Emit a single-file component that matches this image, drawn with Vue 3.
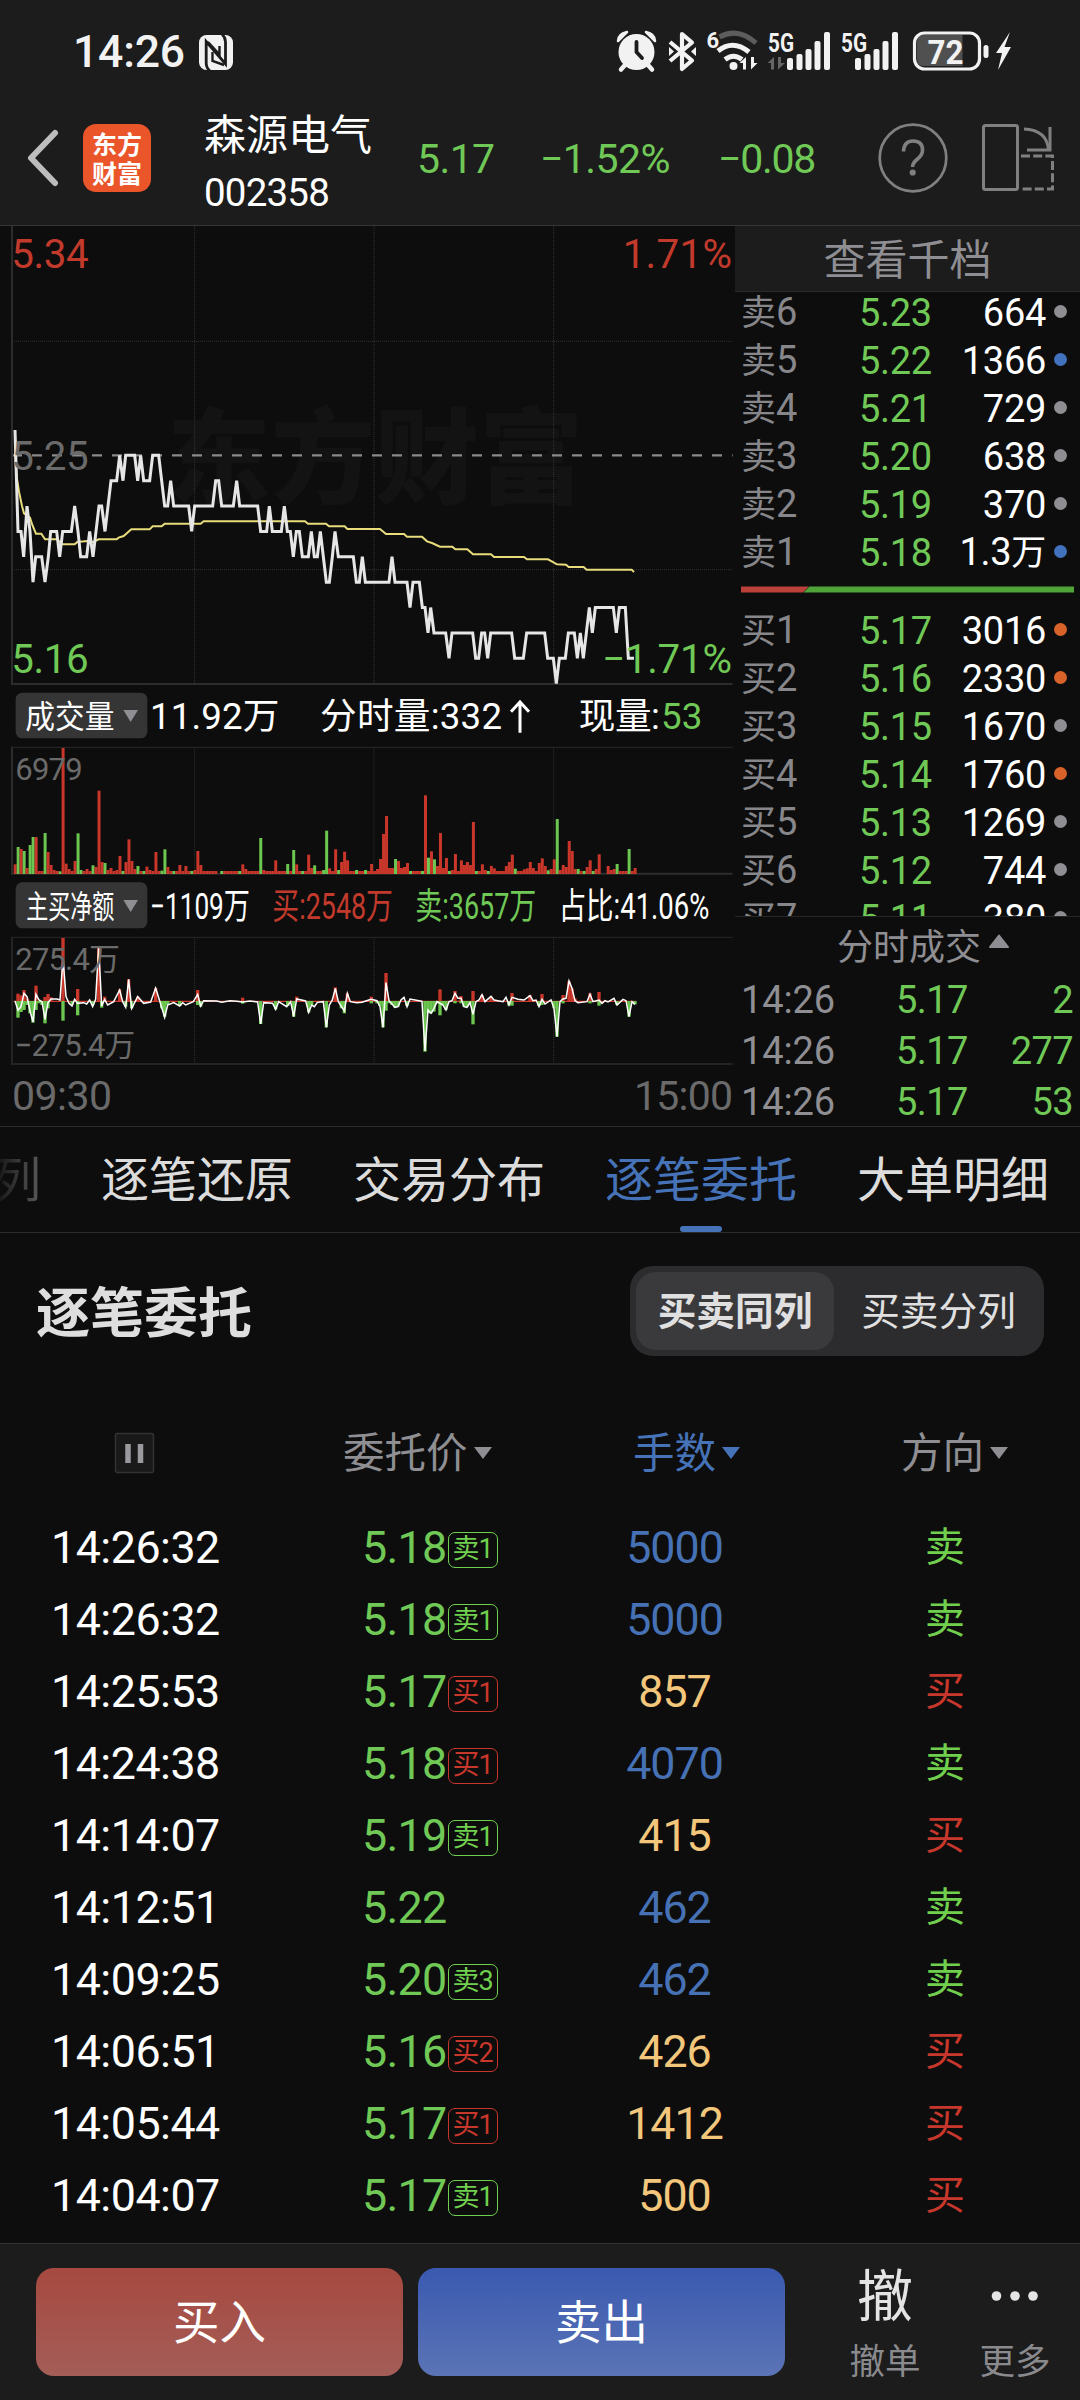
<script setup>
// Intraday chart geometry uses a 3x grid: one unit is a third of a pixel.
const priceSteps = '45,26 54,22 63,22 71,21 81,23 90,22 99,20 107,21 125,21 135,20 145,21 152,22 170,22 179,21 188,22 214,22 224,23 234,22 242,21 260,21 269,22 279,21 288,22 297,23 305,23 315,22 324,23 333,24 350,24 359,25 369,24 377,25 404,25 413,24 422,25 431,24 449,24 458,25 476,25 485,24 494,23 503,23 512,24 521,23 566,23 575,22 584,23 638,23 647,24 656,24 665,23 700,23 710,24 719,23 773,23 782,22 800,22 808,23 817,22 844,22 853,23 862,22 871,22 880,21 889,22 898,22 907,21 925,21 934,22 943,21 952,21 961,22 970,21 979,20 988,20 997,21 1005,22 1015,21 1060,21 1069,20 1078,20 1087,21 1096,20 1167,20 1176,21 1185,20 1221,20 1230,19 1239,20 1258,20 1267,19 1275,19 1284,18 1292,19 1302,18 1337,18 1347,17 1356,18 1418,18 1427,17 1436,17 1445,18 1454,18 1463,17 1472,18 1535,18 1544,17 1570,17 1580,18 1634,18 1643,17 1660,17 1669,16 1678,17 1696,17 1705,18 1723,18 1732,17 1741,18 1750,17 1759,18 1768,19 1777,18 1786,19 1840,19 1849,18 1858,19 1876,19 1885,17 1902,17'
const pricePoints = priceSteps.split(' ').map((p) => {
  const [x, cents] = p.split(',').map(Number)
  return `${x},${(706 + (25 - cents) * 76.1).toFixed(1)}`
}).join(' ')

const averagePoints = '45,700 50,770 57,815 66,858 72,880 90,893 97,915 108,941 124,941 135,958 170,958 188,973 224,973 232,966 262,963 280,966 296,958 350,958 356,953 371,948 394,928 449,928 458,919 485,919 494,911 602,911 611,904 915,904 924,911 978,911 987,919 1034,919 1042,927 1140,927 1158,942 1212,942 1221,950 1266,950 1281,964 1296,969 1320,980 1357,980 1366,988 1402,988 1419,1003 1473,1003 1482,1011 1572,1011 1581,1018 1644,1018 1671,1033 1698,1034 1706,1041 1751,1041 1760,1049 1895,1049 1902,1056'

const volumePeaks = '45r553 54g501 63r507 72g513 81r564 90g495 99g471 108r471 135g459 144r516 153r555 162r570 180g574 189r204 198r551 207r567 224r543 233g460 242g570 260r567 278g556 287r561 296r332 305r546 314g549 323r570 332r564 350r570 359r528 368g573 377r546 386r478 395r543 404r567 413g558 431g573 440r560 449r570 467r516 485g572 494g508 503r561 521g573 539r555 557r558 575g573 584r570 593r513 602r555 656r582 665g573 719g573 728r553 737r567 782g474 791r570 827r541 863g552 881g510 890r553 908g573 926r524 935r564 943g556 970g570 979g452 988r565 1006r508 1015g570 1024r546 1033r515 1042r541 1069g570 1096g570 1114r552 1131r567 1140r537 1149r462 1158r408 1167r564 1176r564 1185g537 1194r543 1203r564 1212r561 1221r549 1230g573 1266g573 1275r346 1284g533 1293r514 1302g538 1311r558 1320r459 1329r564 1338r534 1347g573 1356r570 1365r522 1383r541 1392r555 1401r546 1410r555 1419r426 1428g573 1446r553 1455r570 1464g573 1473r558 1482r565 1518r558 1527r546 1536r524 1545g566 1572r568 1581r565 1590r546 1599r564 1617r549 1626r535 1635r558 1644g571 1653r567 1662r538 1671g417 1680r570 1689r555 1698r561 1707r483 1716r513 1725r567 1734g567 1752g573 1761r561 1770r541 1779g573 1788r567 1797r523 1806r582 1815r582 1824r558 1833r570 1842r567 1851g552 1887g507 1905r564'
const slot = 8.985
const volumeBars = Array.from({ length: 208 }, () => ({ color: 'r', top: 573 }))
for (const peak of volumePeaks.split(' ')) {
  const [, x, color, top] = peak.match(/(\d+)([rg])(\d+)/)
  volumeBars[Math.round((x - 45) / slot)] = { color, top: Number(top) }
}

const netBars = '54,941,1013 63,946,996 72,930,990 81,955,975 90,963,1000 99,963,1028 108,917,990 117,963,970 126,963,975 135,951,1030 144,942,985 153,952,963 189,774,1022 216,963,974 233,927,1006 278,963,975 296,800,963 305,963,983 314,950,963 359,928,963 377,963,980 386,898,963 395,963,985 413,950,963 467,924,963 485,963,985 494,963,1010 503,963,975 539,963,978 593,930,975 602,963,980 728,953,971 782,963,1032 827,963,988 863,963,978 881,963,1010 890,950,963 926,963,997 935,963,975 979,963,1042 1006,922,963 1024,963,985 1033,963,1000 1042,940,963 1114,950,970 1131,963,970 1140,963,978 1149,963,1042 1158,879,992 1167,963,970 1176,963,975 1185,963,983 1194,963,980 1221,963,978 1275,963,1115 1284,963,1000 1293,963,1000 1302,963,995 1311,963,970 1320,928,1006 1329,963,975 1338,963,990 1365,933,970 1383,948,970 1392,963,980 1401,963,980 1410,963,970 1419,933,1033 1446,945,963 1473,950,963 1527,963,977 1536,939,977 1590,945,963 1617,963,978 1626,942,975 1662,963,985 1671,963,1070 1689,945,970 1707,903,963 1716,925,963 1725,955,963 1770,940,970 1797,936,977 1851,963,975 1887,963,1010 1905,963,973'
  .split(' ').map((b) => b.split(',').map(Number))

const netLine = '45,963 54,991 63,980 72,940 81,950 90,993 99,1026 108,943 117,960 126,965 135,1018 144,968 153,957 171,957 180,960 189,835 198,950 207,970 216,978 224,958 233,970 251,968 260,972 269,960 278,980 287,958 296,800 305,978 314,958 323,975 341,965 359,930 368,965 377,982 386,898 395,985 413,950 431,970 452,966 467,924 480,966 494,1012 503,975 521,968 539,978 548,968 557,975 580,965 593,943 602,978 611,962 650,963 665,967 690,962 710,964 728,966 750,963 773,966 782,1032 791,968 818,970 827,988 836,965 860,980 872,965 881,1010 890,957 917,963 926,997 935,975 943,980 952,967 970,965 979,1042 988,975 997,960 1006,925 1015,965 1033,993 1042,940 1051,965 1070,968 1086,967 1113,958 1131,962 1140,980 1149,1042 1158,908 1167,962 1185,982 1194,980 1203,960 1212,952 1221,980 1230,957 1257,962 1266,964 1275,1113 1284,990 1293,1000 1302,985 1311,965 1329,975 1338,990 1347,965 1356,962 1365,940 1374,955 1383,955 1392,980 1401,982 1410,968 1419,1003 1428,965 1437,960 1446,944 1455,965 1473,949 1482,960 1509,965 1518,952 1527,975 1536,952 1554,958 1572,960 1590,947 1599,962 1608,960 1617,980 1626,958 1635,972 1653,960 1662,985 1671,1070 1680,965 1689,957 1698,955 1707,903 1716,925 1725,962 1734,968 1761,965 1770,943 1779,965 1797,960 1806,970 1815,962 1824,966 1842,955 1851,975 1869,958 1878,962 1887,1010 1896,965 1905,973'

const asks = [
  ['6', '5.23', '664', '', 'grey'],
  ['5', '5.22', '1366', '', 'blue'],
  ['4', '5.21', '729', '', 'grey'],
  ['3', '5.20', '638', '', 'grey'],
  ['2', '5.19', '370', '', 'grey'],
  ['1', '5.18', '1.3', '万', 'blue'],
]
const bids = [
  ['1', '5.17', '3016', '', 'orange'],
  ['2', '5.16', '2330', '', 'orange'],
  ['3', '5.15', '1670', '', 'grey'],
  ['4', '5.14', '1760', '', 'orange'],
  ['5', '5.13', '1269', '', 'grey'],
  ['6', '5.12', '744', '', 'grey'],
  ['7', '5.11', '380', '', 'grey'],
]
const trades = [['14:26', '5.17', '2'], ['14:26', '5.17', '277'], ['14:26', '5.17', '53']]

const tabs = ['逐笔还原', '交易分布', '逐笔委托', '大单明细']

const orders = [
  ['14:26:32', '5.18', '卖1', '5000', '卖'],
  ['14:26:32', '5.18', '卖1', '5000', '卖'],
  ['14:25:53', '5.17', '买1', '857', '买'],
  ['14:24:38', '5.18', '买1', '4070', '卖'],
  ['14:14:07', '5.19', '卖1', '415', '买'],
  ['14:12:51', '5.22', '', '462', '卖'],
  ['14:09:25', '5.20', '卖3', '462', '卖'],
  ['14:06:51', '5.16', '买2', '426', '买'],
  ['14:05:44', '5.17', '买1', '1412', '买'],
  ['14:04:07', '5.17', '卖1', '500', '买'],
]
const side = (text) => (text.startsWith('买') ? 'buy' : 'sell')
const lotTone = (o) => (o[4] === '卖' ? 'lot-blue' : 'lot-gold')
</script>

<template>
  <div class="screen">
    <header class="top">
      <div class="status">
        <span class="clock">14:26</span>
        <svg class="nfc" width="36" height="37" viewBox="0 0 36 37">
          <rect x="1" y="1" width="34" height="35" rx="7.500" fill="#f2f2f2" />
          <path d="M12 37Q8.200 34 8.200 29V7.500L27.500 30V8Q27.500 3.500 24 0" fill="none" stroke="#1c1c1c" stroke-width="2.800" />
          <path d="M10 8L21.500 20.500V12M14.500 18V27L26 31" fill="none" stroke="#1c1c1c" stroke-width="2.400" />
        </svg>
        <svg class="signals" width="400" height="50" viewBox="0 0 400 50">
          <g fill="#f2f2f2">
            <circle cx="26.500" cy="31" r="18" />
            <path d="M8 20Q8 13 17 11Z M45 20Q45 13 36 11Z" stroke="#f2f2f2" stroke-width="2.500" stroke-linejoin="round" />
          </g>
          <path d="M15 44L11 48.500M38 44L42 48.500" stroke="#f2f2f2" stroke-width="4.500" stroke-linecap="round" />
          <path d="M26.500 21V31L32 37" stroke="#1c1c1c" stroke-width="3.800" fill="none" stroke-linecap="round" />
          <path d="M60 21L82 39.500L72 48V13L82 21.500L60 40" fill="none" stroke="#f2f2f2" stroke-width="4.200" stroke-linejoin="round" />
          <path d="M59 26L64 30.500L59 35ZM86 26L81 30.500L86 35Z" fill="#f2f2f2" />
          <text x="96.500" y="26.500" class="sig" font-size="22" textLength="11">6</text>
          <g fill="none" stroke-width="5">
            <path d="M109.500 16Q128 6 146 22" stroke="#5d5d5d" />
            <path d="M108 30Q123 18 139 31" stroke="#f2f2f2" />
            <path d="M115 38.500Q123.500 32 132 38.500" stroke="#f2f2f2" />
          </g>
          <circle cx="123.500" cy="45" r="4" fill="#f2f2f2" />
          <path d="M129.500 42L136 36V48.500H133V42ZM147.500 42L141 48.500V36H144V42Z" fill="#f2f2f2" />
          <text x="158" y="30.500" class="sig" font-size="26" textLength="26" lengthAdjust="spacingAndGlyphs">5G</text>
          <path d="M157.500 42L164 36V48.500H161V42ZM175 42L168 48.500V36H171V42Z" fill="#666" />
          <g fill="#f2f2f2">
            <rect x="177" y="37" width="6" height="12" rx="2" /><rect x="186.500" y="33" width="6" height="16" rx="2" /><rect x="195.500" y="28" width="6" height="21" rx="2" /><rect x="204.500" y="20" width="6" height="29" rx="2" /><rect x="214" y="11" width="6" height="38" rx="2" />
            <rect x="245" y="37" width="6" height="12" rx="2" /><rect x="254.500" y="33" width="6" height="16" rx="2" /><rect x="263.500" y="28" width="6" height="21" rx="2" /><rect x="272.500" y="20" width="6" height="29" rx="2" /><rect x="282" y="11" width="6" height="38" rx="2" />
          </g>
          <text x="231" y="30.500" class="sig" font-size="26" textLength="26" lengthAdjust="spacingAndGlyphs">5G</text>
          <path d="M313 14H352.500V45H313Q307 45 307 38V21Q307 14 313 14Z" fill="#505050" />
          <rect x="304.500" y="12" width="65" height="36" rx="10" fill="none" stroke="#f2f2f2" stroke-width="3.200" />
          <rect x="373.500" y="24" width="5" height="13" rx="2.500" fill="#f2f2f2" />
          <text x="317.500" y="42.500" class="sig" font-size="34" textLength="36" lengthAdjust="spacingAndGlyphs">72</text>
          <path d="M400 11L386 32H392L388 49L401 26H394.500Z" fill="#f2f2f2" />
        </svg>
      </div>
      <div class="quote">
        <svg class="back" width="34" height="58" viewBox="0 0 34 58"><path d="M29 4L5 29L29 54" fill="none" stroke="#bdbdbd" stroke-width="6" stroke-linecap="round" stroke-linejoin="round" /></svg>
        <div class="logo"><span>东方</span><span>财富</span></div>
        <div class="stock"><span class="name">森源电气</span><span class="code">002358</span></div>
        <span class="q q1">5.17</span>
        <span class="q q2">−1.52%</span>
        <span class="q q3">−0.08</span>
        <svg class="help" width="70" height="70" viewBox="0 0 70 70">
          <circle cx="35" cy="35" r="33.300" fill="none" stroke="#808080" stroke-width="2.700" />
          <path d="M25.500 28.500Q26 18 35 18Q44.500 18 44.500 27Q44.500 32 39.500 36Q34.500 40 34.500 44" fill="none" stroke="#808080" stroke-width="3.600" />
          <circle cx="34.700" cy="49.500" r="3.100" fill="#808080" />
        </svg>
        <svg class="rotate" width="74" height="70" viewBox="0 0 74 70" fill="none" stroke="#808080" stroke-width="3">
          <rect x="2.500" y="2.500" width="34" height="64" rx="2" />
          <path d="M43 6Q66 7 67.500 27" /><path d="M69 4V27H46" />
          <path d="M40 33H71.500V66H40" stroke-dasharray="9 3.200" />
        </svg>
      </div>
    </header>

    <section class="market">
      <div class="charts">
        <svg width="735" height="464" viewBox="0 18 2205 1392">
          <g class="mark" font-size="312">
            <text x="500" y="828" textLength="1250">东方财富</text>
          </g>
          <g class="dots"><path d="M584 18V1390M1122 18V1390M1661 18V1390M36 364H2198M36 1049H2198" /></g>
          <path d="M36 706H2198" stroke="#8a8a8a" stroke-width="7" stroke-dasharray="30 30" />
          <path d="M36 18V1392H2198" fill="none" stroke="#2c2c2c" stroke-width="6" />
          <polyline :points="averagePoints" class="avg" />
          <polyline :points="pricePoints" class="line" />
          <g font-size="121">
            <text x="34" y="143" textLength="232" class="f-red">5.34</text>
            <text x="34" y="749" textLength="232" class="f-dim">5.25</text>
            <text x="34" y="1358" textLength="232" class="f-green">5.16</text>
            <text x="1868" y="143" textLength="328" class="f-red">1.71%</text>
            <text x="1806" y="1358" textLength="390" class="f-green">−1.71%</text>
          </g>
        </svg>
        <svg width="735" height="56" viewBox="0 30 2205 168">
          <rect x="47" y="38" width="395" height="137" rx="20" fill="#353535" />
          <g font-size="110">
            <text x="76" y="144" font-size="95" textLength="268" lengthAdjust="spacingAndGlyphs" class="f-white">成交量</text>
            <path d="M370 90H414L392 126Z" fill="#8e8e93" />
            <text x="450" y="147" textLength="388" class="f-white">11.92万</text>
            <text x="960" y="147" textLength="546" class="f-white">分时量:332</text>
            <path d="M1560 158V66M1533 95L1560 66L1587 95" fill="none" stroke="#fff" stroke-width="9" />
            <text x="1736" y="147" textLength="244" class="f-white">现量:</text>
            <text x="1983" y="147" textLength="124" class="f-green">53</text>
          </g>
        </svg>
        <svg width="735" height="132" viewBox="0 198 2205 396">
          <g class="dots"><path d="M584 202V580M1122 202V580M1661 202V580" /></g>
          <path d="M36 202H2198" stroke="#292929" stroke-width="3" />
          <path d="M36 200V581H2198" fill="none" stroke="#2c2c2c" stroke-width="6" />
          <rect v-for="(b, i) in volumeBars" :key="i" :x="41 + i * slot" :y="b.top" width="9" :height="582 - b.top" :class="b.color === 'r' ? 'b-red' : 'b-green'" />
          <text x="46" y="299" font-size="93" textLength="202" class="f-dim">6979</text>
        </svg>
        <svg width="735" height="56" viewBox="0 594 2205 168">
          <rect x="47" y="607" width="395" height="138" rx="20" fill="#353535" />
          <g font-size="110">
            <text x="79" y="714" font-size="95" textLength="264" lengthAdjust="spacingAndGlyphs" class="f-white">主买净额</text>
            <path d="M370 660H414L392 696Z" fill="#8e8e93" />
            <text x="450" y="716" textLength="300" lengthAdjust="spacingAndGlyphs" class="f-white">−1109万</text>
            <text x="817" y="716" textLength="362" lengthAdjust="spacingAndGlyphs" class="f-red">买:2548万</text>
            <text x="1246" y="716" textLength="363" lengthAdjust="spacingAndGlyphs" class="f-green">卖:3657万</text>
            <text x="1676" y="716" textLength="452" lengthAdjust="spacingAndGlyphs" class="f-white">占比:41.06%</text>
          </g>
        </svg>
        <svg width="735" height="192" viewBox="0 762 2205 576">
          <g class="dots"><path d="M584 771V1152M1122 771V1152M1661 771V1152" /></g>
          <path d="M36 772H2198" stroke="#292929" stroke-width="3" />
          <path d="M36 770V1152H2198" fill="none" stroke="#242424" stroke-width="6" />
          <path d="M41 964H1908" stroke="#d03a2c" stroke-width="4" />
          <g v-for="b in netBars" :key="b[0]">
            <rect :x="b[0] - 5" :y="b[1]" width="10" :height="963 - b[1]" class="b-red" />
            <rect :x="b[0] - 5" y="963" width="10" :height="b[2] - 963" class="b-green" />
          </g>
          <polyline :points="netLine" class="net" />
          <g font-size="93">
            <text x="46" y="869" textLength="314" class="f-dim">275.4万</text>
            <text x="44" y="1128" textLength="362" class="f-dim">−275.4万</text>
          </g>
          <g font-size="123">
            <text x="36" y="1289" textLength="300" class="f-dim">09:30</text>
            <text x="1902" y="1289" textLength="297" class="f-dim">15:00</text>
          </g>
        </svg>
      </div>

      <aside class="book">
        <div class="book-head">查看千档</div>
        <div class="levels">
          <div v-for="r in asks" :key="'a' + r[0]" class="level">
            <span class="lv">卖<b>{{ r[0] }}</b></span><span class="pr">{{ r[1] }}</span>
            <span class="qty">{{ r[2] }}<i v-if="r[3]">{{ r[3] }}</i></span><span class="dot" :class="r[4]"></span>
          </div>
          <svg class="ratio" width="333" height="30" viewBox="0 0 333 30">
            <path d="M0 10.500H68L62 16.500H0Z" fill="#b9413a" /><path d="M68.500 10.500H333V16.500H62.500Z" fill="#4fa338" />
          </svg>
          <div v-for="r in bids" :key="'b' + r[0]" class="level">
            <span class="lv">买<b>{{ r[0] }}</b></span><span class="pr">{{ r[1] }}</span>
            <span class="qty">{{ r[2] }}</span><span class="dot" :class="r[4]"></span>
          </div>
        </div>
        <div class="ticks-head">分时成交<svg width="22" height="15" viewBox="0 0 22 15"><path d="M11 1.500L20 13H2Z" fill="#8e8e93" stroke="#8e8e93" stroke-width="2" stroke-linejoin="round" /></svg></div>
        <div v-for="(t, i) in trades" :key="i" class="tick"><span class="tm">{{ t[0] }}</span><span class="tp">{{ t[1] }}</span><span class="tq">{{ t[2] }}</span></div>
      </aside>
    </section>

    <nav class="tabs">
      <span class="tab cut">列</span>
      <span v-for="(t, i) in tabs" :key="t" class="tab" :class="{ on: i === 2 }">{{ t }}</span>
    </nav>

    <section class="panel">
      <div class="panel-head">
        <h2>逐笔委托</h2>
        <div class="toggle"><span class="opt active">买卖同列</span><span class="opt">买卖分列</span></div>
      </div>
      <div class="thead">
        <span class="c-time"><svg width="42" height="42" viewBox="0 0 42 42"><rect x="1.500" y="1.500" width="38" height="39" rx="2" fill="#191919" stroke="#333" stroke-width="1.500" /><path d="M14 12V31M26.500 12V31" stroke="#9a9a9e" stroke-width="5.500" /></svg></span>
        <span class="c-price">委托价<em></em></span>
        <span class="c-lot hot">手数<em></em></span>
        <span class="c-side">方向<em></em></span>
      </div>
      <div v-for="(o, i) in orders" :key="i" class="row">
        <span class="c-time">{{ o[0] }}</span>
        <span class="c-price">{{ o[1] }}<small v-if="o[2]" :class="side(o[2])">{{ o[2] }}</small></span>
        <span class="c-lot" :class="lotTone(o)">{{ o[3] }}</span>
        <span class="c-side" :class="side(o[4])">{{ o[4] }}</span>
      </div>
    </section>

    <footer class="bar">
      <div class="btn btn-buy">买入</div>
      <div class="btn btn-sell">卖出</div>
      <div class="act"><span class="glyph">撤</span><span class="cap">撤单</span></div>
      <div class="act more"><span class="glyph"><svg width="48" height="12" viewBox="0 0 48 12"><circle cx="5.500" cy="6" r="4.800" /><circle cx="24" cy="6" r="4.800" /><circle cx="42" cy="6" r="4.800" /></svg></span><span class="cap">更多</span></div>
    </footer>
  </div>
</template>

<style>
body { background: #0d0d0d; }
</style>

<style scoped>
.screen { width: 1080px; height: 2400px; background: #0d0d0d; color: #fff; font-family: Roboto, "Noto Sans CJK SC", sans-serif; overflow: hidden; display: flex; flex-direction: column; box-sizing: border-box; }
.screen * { box-sizing: border-box; }
svg { display: block; flex: none; }

.top { height: 226px; background: #1c1c1c; border-bottom: 1px solid #353535; flex: none; }
.status { height: 90px; display: flex; align-items: flex-start; padding-left: 73px; }
.clock { width: 125px; font-size: 44.500px; font-weight: 500; line-height: 52px; margin-top: 26px; color: #f2f2f2; letter-spacing: -0.2px; }
.nfc { margin-top: 34px; }
.signals { margin: 21px 0 0 376px; overflow: visible; }
.sig { fill: #f2f2f2; font-weight: 700; }
.quote { height: 135px; display: flex; align-items: flex-start; }
.back { margin: 39px 0 0 26px; }
.logo { margin: 34px 0 0 23px; width: 68px; height: 68px; border-radius: 13px; background: #ea552a; display: flex; flex-direction: column; align-items: center; padding-top: 5px; flex: none; }
.logo span { font-family: "Noto Sans CJK SC", sans-serif; font-weight: 700; font-size: 25px; line-height: 29px; white-space: nowrap; }
.stock { margin: 20px 0 0 53px; width: 213px; display: flex; flex-direction: column; flex: none; }
.name { font-size: 42px; line-height: 52px; }
.code { font-size: 38.500px; line-height: 44px; margin-top: 9px; letter-spacing: -0.8px; }
.q { font-size: 41px; line-height: 48px; margin-top: 45px; color: #70c956; letter-spacing: -0.6px; white-space: nowrap; flex: none; }
.q1 { width: 123px; }
.q2 { width: 178px; }
.q3 { width: 160px; letter-spacing: -1.300px; }
.help { margin: 33px 0 0 0; }
.rotate { margin: 33px 0 0 33px; }

.market { height: 901px; display: flex; border-bottom: 1px solid #2c2c2c; flex: none; overflow: hidden; }
.charts { width: 735px; display: flex; flex-direction: column; flex: none; }
.mark text { fill: #131313; font-family: "Noto Sans CJK SC", sans-serif; font-weight: 900; }
.dots path { fill: none; stroke: #333; stroke-width: 3; stroke-dasharray: 3 3; }
.avg { fill: none; stroke: #e8dc7c; stroke-width: 6; }
.line { fill: none; stroke: #e6e6e6; stroke-width: 9; }
.net { fill: none; stroke: #fff; stroke-width: 4.500; }
.f-red { fill: #c23a2c; }
.f-green { fill: #70c956; }
.f-dim { fill: #6a6a6a; }
.f-white { fill: #fff; }
.b-red { fill: #c9362a; }
.b-green { fill: #6cc751; }

.book { width: 345px; display: flex; flex-direction: column; }
.book-head { height: 66px; background: #1c1c1c; border-bottom: 1.500px solid #2a2a2a; color: #8e8e93; font-size: 42px; line-height: 69px; text-align: center; flex: none; }
.levels { height: 625px; overflow: hidden; border-bottom: 1px solid #262626; padding-left: 6px; flex: none; }
.level { height: 48px; display: flex; align-items: center; font-size: 38px; line-height: 48px; position: relative; top: -3.500px; }
.lv { width: 118px; font-size: 35px; color: #87878b; white-space: nowrap; }
.lv b { font-weight: 400; font-size: 38px; }
.pr { width: 80px; color: #70c956; letter-spacing: -0.3px; }
.qty { width: 107px; text-align: right; letter-spacing: -0.300px; white-space: nowrap; }
.qty i { font-style: normal; font-size: 35px; }
.dot { width: 13px; height: 13px; border-radius: 50%; margin-left: 8px; margin-top: -3px; }
.grey { background: #8e8e93; }
.blue { background: #4271bd; }
.orange { background: #d9622b; }
.ratio { position: relative; top: -4px; }
.ticks-head { height: 58px; display: flex; align-items: center; padding: 0 0 5px 102px; font-size: 36px; color: #8e8e93; flex: none; }
.ticks-head svg { margin: -5px 0 0 7px; }
.tick { height: 51px; display: flex; align-items: center; font-size: 38px; line-height: 51px; color: #70c956; letter-spacing: -0.6px; padding: 0 7px 0 6px; flex: none; }
.tm { width: 155px; color: #8e8e93; letter-spacing: -0.1px; }
.tp { width: 80px; }
.tq { flex: 1; text-align: right; }

.tabs { height: 106px; display: flex; gap: 60px; border-bottom: 1px solid #2c2c2c; flex: none; overflow: hidden; font-size: 48px; line-height: 108px; color: #dcdcdc; white-space: nowrap; }
.tab { flex: none; display: flex; flex-direction: column; align-items: center; height: 105px; }
.cut { margin-left: -7px; color: transparent; background: linear-gradient(90deg, #111 0%, #5a5a5a 100%); background-clip: text; }
.on { color: #4673b8; }
.on::after { content: ""; width: 42px; height: 6px; border-radius: 3px; background: #4673b8; margin-top: -9px; flex: none; }

.panel { height: 1010px; flex: none; }
.panel-head { height: 161px; padding: 33px 36px 0 36px; display: flex; justify-content: space-between; }
h2 { margin: 0; font-size: 54px; line-height: 97px; font-weight: 700; color: #dedede; height: 92px; }
.toggle { width: 414px; height: 90px; border-radius: 23px; background: #2c2c2e; display: flex; padding: 6px; color: #e0e0e0; font-size: 38.700px; line-height: 80px; }
.opt { width: 198px; height: 78px; text-align: center; }
.opt + .opt { width: 209px; margin-right: -5px; flex: none; }
.active { border-radius: 20px; background: #3a3a3c; font-weight: 700; }
.thead, .row { display: flex; align-items: center; height: 72px; }
.thead { height: 118px; font-size: 41.500px; color: #8e8e93; }
.c-time, .c-price, .c-lot { flex: none; }
.c-time { width: 362px; padding-left: 51px; letter-spacing: -0.5px; }
.thead .c-time { padding-left: 114px; width: 343px; }
.c-price { width: 210px; display: flex; align-items: center; letter-spacing: -0.7px; }
.thead .c-price { width: 290px; letter-spacing: 0; }
.c-lot { width: 205px; text-align: center; letter-spacing: -1px; }
.thead .c-lot { width: 268px; text-align: left; letter-spacing: 0; }
.thead span { display: flex; align-items: center; line-height: 60px; padding-top: 2px; }
.thead .c-time { padding-top: 0; }
em { width: 0; height: 0; border-left: 9px solid transparent; border-right: 9px solid transparent; border-top: 12px solid currentColor; margin: -3px 0 0 6px; }
.hot { color: #4673b8; }
.row { font-size: 44.800px; line-height: 72px; }
.row .c-price { color: #70c956; }
.row .c-side { width: 303px; padding-left: 33px; text-align: center; font-size: 40px; }
.c-side { flex: none; }
small { width: 50px; height: 36px; border: 1px solid; border-radius: 7px; font-size: 27px; line-height: 33px; text-align: center; letter-spacing: -1px; margin: 3px 0 0 1px; flex: none; }
.buy { color: #c8372b; }
.sell { color: #70d04e; }
.lot-blue { color: #4671b4; }
.lot-gold { color: #f2c77c; }

.bar { height: 157px; background: #1c1c1c; border-top: 1px solid #353535; display: flex; padding: 24px 0 0 36px; flex: none; }
.btn { width: 367px; height: 108px; border-radius: 18px; margin-right: 15px; font-size: 46.500px; line-height: 111px; text-align: center; flex: none; }
.btn-buy { background: linear-gradient(#a64940, #a45d57); }
.btn-sell { background: linear-gradient(#3a59b0, #5b74b6); }
.act { width: 70px; margin: 1px 0 0 50px; display: flex; flex-direction: column; align-items: center; white-space: nowrap; flex: none; }
.glyph { height: 56px; font-size: 56px; line-height: 54px; color: #e4e4e4; display: flex; align-items: center; }
.glyph svg { fill: #e4e4e4; margin-top: -3px; }
.cap { font-size: 35.500px; line-height: 40px; margin-top: 17px; color: #8a8a8e; }
.more { margin-left: 60px; }
</style>
